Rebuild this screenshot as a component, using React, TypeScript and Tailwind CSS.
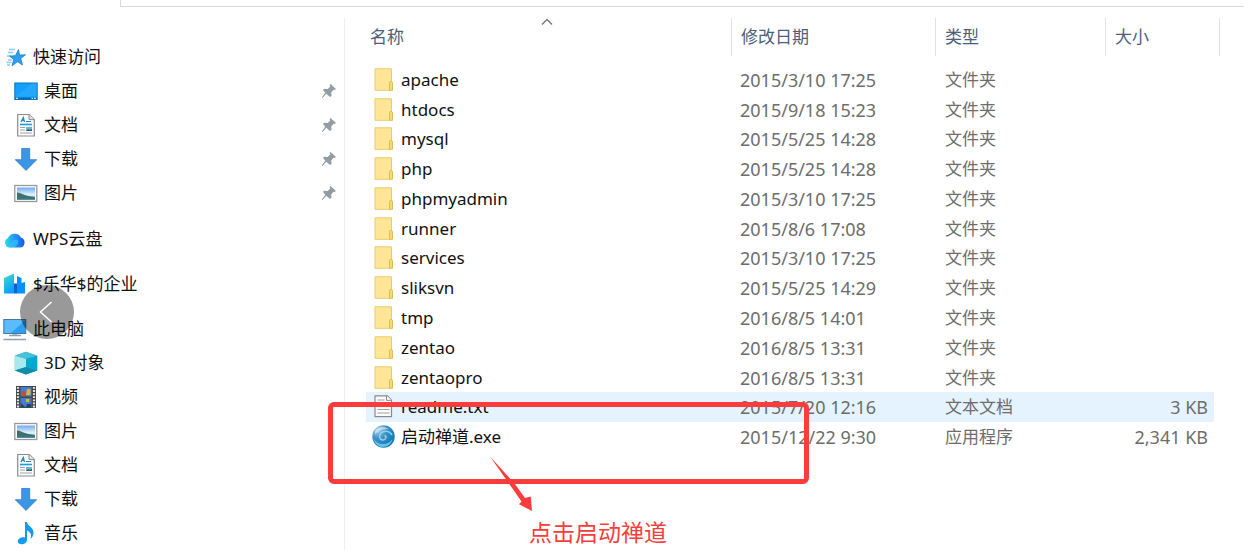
import type { ReactNode } from "react"

type SideItem = {
  label: string
  icon: ReactNode
  nested?: boolean
  pinned?: boolean
  space?: string
}

type FileRow = {
  name: string
  date: string
  kind: "folder" | "text" | "app"
  size?: string
}

function StarIcon() {
  return (
    <svg viewBox="0 0 24 24" className="size-6" aria-hidden="true">
      <path d="M6 4.500h6M5 7.500h5M4 11h4M5 15h4M3.500 17.500h5M4 20h3" stroke="#8accf5" strokeWidth="1.300" />
      <path
        d="M15.500 4.500l1 5.500 6-.2-4.700 3.700 1.700 6.500-5-3.200-5.500 4 1.700-6.300-4-3.300 5.800-.7z"
        fill="#2b9fee"
        stroke="#1677bd"
        strokeWidth=".7"
      />
    </svg>
  )
}

function DesktopIcon() {
  return (
    <svg viewBox="0 0 24 24" className="size-6" aria-hidden="true">
      <rect x=".8" y="4" width="22.400" height="16.500" fill="#149ffb" stroke="#0a76c4" />
      <path d="M1.500 17.500L18 4.500h4.700v13z" fill="#35affe" opacity=".45" />
      <path d="M1 18.500h22v2H1z" fill="#0969b0" />
      <path d="M2 19.300h2M17.500 19.300h1.500M20 19.300h2" stroke="#fff" />
    </svg>
  )
}

function DocumentIcon() {
  return (
    <svg viewBox="0 0 24 24" className="size-6" aria-hidden="true">
      <path d="M3.700 1.500h11.600l5 5v16.500H3.700z" fill="#fcfcfc" stroke="#8d8d8d" strokeWidth="1.200" />
      <path d="M15 1.500v5.100h5.300" fill="#e4e4e4" stroke="#8d8d8d" />
      <path d="M7 9l2.300-4.500L10.500 9M8 7.500h2.500M12 8.500h5" stroke="#2488cc" strokeWidth="1.200" fill="none" />
      <path d="M6 11.500h12" stroke="#1d9be4" strokeWidth="1.600" />
      <path d="M6 14.500h5M6 17h5M6 20h12" stroke="#9ba4aa" />
      <rect x="12" y="14" width="6" height="4" fill="#6cb5d2" />
      <path d="M12 18l2-2 2 1 2-1v2z" fill="#315e62" />
    </svg>
  )
}

function DownloadIcon() {
  return (
    <svg viewBox="0 0 24 24" className="size-6" aria-hidden="true">
      <path d="M7.700 1.500h8v11.200h7L12 23.400 1.300 12.700h6.400z" fill="#3c96e4" stroke="#2c7dc8" strokeWidth=".8" />
    </svg>
  )
}

function PictureIcon() {
  return (
    <svg viewBox="0 0 24 24" className="size-6" aria-hidden="true">
      <defs>
        <linearGradient id="sky" x2="0" y2="1">
          <stop stopColor="#6eaaf0" />
          <stop offset=".6" stopColor="#e2f2f8" />
          <stop offset="1" stopColor="#7fbecb" />
        </linearGradient>
      </defs>
      <rect x=".8" y="4.500" width="22" height="16" fill="#fff" stroke="#999" strokeWidth="1.300" />
      <rect x="3" y="6.500" width="18" height="12" fill="url(#sky)" />
      <path d="M3 11.500c3 0 5 1.500 8 2.500s6 1.500 10 2v2.500H3z" fill="#3e716b" />
      <path d="M3 17c6-.5 12 0 18-.5v2H3z" fill="#377789" />
    </svg>
  )
}

function CloudIcon() {
  return (
    <svg viewBox="0 0 24 24" className="size-6" aria-hidden="true">
      <defs>
        <linearGradient id="cloud">
          <stop stopColor="#29dfdc" />
          <stop offset=".5" stopColor="#2695fb" />
          <stop offset="1" stopColor="#1558e9" />
        </linearGradient>
      </defs>
      <path d="M6.500 20.500A5 5 0 0 1 5 11a7 6.500 0 0 1 13-.5 5.200 5.200 0 0 1-.5 10z" fill="url(#cloud)" />
      <path d="M3 19C8 18.500 9 12.500 13 12.500c2 0 3 2 2 4-1 2.500-3 4-7 4-2 0-4-.5-5-1.500z" fill="#32c9f5" opacity=".6" />
    </svg>
  )
}

function CompanyIcon() {
  return (
    <svg viewBox="0 0 24 24" className="size-6" aria-hidden="true">
      <defs>
        <linearGradient id="tower" x2=".4" y2="1">
          <stop stopColor="#3ce5bd" />
          <stop offset="1" stopColor="#0a9fff" />
        </linearGradient>
      </defs>
      <path d="M1 6l10-4.500v20H1z" fill="url(#tower)" />
      <path d="M14 4l4.500 2v5l3.500-1v11.500h-8z" fill="#0a91ff" />
      <path d="M11 11.500h3v10h-3z" fill="#0560cb" />
    </svg>
  )
}

function ComputerIcon() {
  return (
    <svg viewBox="0 0 24 24" className="size-6" aria-hidden="true">
      <rect x=".8" y="2.500" width="22" height="14" fill="#2b9ff3" stroke="#4d7897" />
      <path d="M1.500 3h21L8 16H1.500z" fill="#70c7ff" opacity=".7" />
      <path d="M9.500 17h5v2h-5z" fill="#a8c0cf" />
      <path d="M6 18.500h12M.5 22.500h22.500" stroke="#8f9fb0" strokeWidth="1.600" />
    </svg>
  )
}

function CubeIcon() {
  return (
    <svg viewBox="0 0 24 24" className="size-6" aria-hidden="true">
      <path d="M12 .8l11.200 4v14.700L12 23.500.8 19.500V4.800z" fill="#27aac8" />
      <path d="M.8 4.800L12 .8l11.200 4L12 8z" fill="#49c1d8" />
      <path d="M.8 4.800L12 8v8L.8 19.500z" fill="#a9e8ec" />
      <path d="M12 8l11.200-3.200v14.700L12 16z" fill="#06a8d1" />
      <path d="M.8 19.500L12 16l11.200 3.500-11.200 4z" fill="#128da9" />
    </svg>
  )
}

function VideoIcon() {
  return (
    <svg viewBox="0 0 24 24" className="size-6" aria-hidden="true">
      <path d="M2 1h20v22H2z" fill="#454545" />
      <path d="M4 2v21M20 2v21" stroke="#e6e6e6" strokeWidth="2.200" strokeDasharray="1.800 1.300" />
      <path d="M6.500 2h11v9.500h-11zM6.500 13h11v9h-11z" fill="#447ed1" />
      <path d="M7 8c3-3 3-3 5 0v3H7z" fill="#b65149" />
      <path d="M13 4h3.500v6H12zM12 14h3v3h-3z" fill="#dfb629" />
      <path d="M7 18l4 4H7zM13 19h4v3h-5z" fill="#253d70" />
    </svg>
  )
}

function MusicIcon() {
  return (
    <svg viewBox="0 0 24 24" className="size-6" aria-hidden="true">
      <path
        d="M11 1h2c.3 4 6.500 5 6.500 10.500 0 3-1.200 5-3 6.500 1.500-5-.5-7.300-3.500-8.500v9.300c0 2.500-2.500 4.500-5.500 4.500-2.300 0-3.700-1.200-3.700-3 0-2.700 3.500-4.600 7.200-3.800z"
        fill="#149af2"
      />
    </svg>
  )
}

function PinIcon() {
  return (
    <svg viewBox="0 0 16 16" className="size-4" aria-hidden="true">
      <path d="M9.500 1L15 6l-1.500 1-1-.2-2.300 2.700.3 3.300L9 14l-3.700-3.300L1.500 15H1v-.8l3.300-4.500L2 7l1-1.300 3.700.3 2.600-2.500L8.500 2z" fill="#929ca3" />
    </svg>
  )
}

function FolderIcon() {
  return (
    <svg viewBox="0 0 24 24" className="size-6" aria-hidden="true">
      <path d="M3 .8h16.500v21.500H3z" fill="#ffe696" stroke="#e9cb69" />
      <path d="M17.500 14.500c0-1.500 3-1.500 3 0v7.800h-3z" fill="#f7d874" stroke="#dfbd55" />
    </svg>
  )
}

function TextIcon() {
  return (
    <svg viewBox="0 0 24 24" className="size-6" aria-hidden="true">
      <path d="M3 .8h12.500l4 4.400v16.500H3z" fill="#fafafa" stroke="#8b8b8b" strokeWidth="1.200" />
      <path d="M14.500.8v4.500h5" fill="#fff" stroke="#8b8b8b" />
      <path d="M5.500 5h7M5.500 8h12M5.500 11.500h12M5.500 14.500h12M5.500 18h12" stroke="#a1a1a1" strokeWidth="1.200" />
    </svg>
  )
}

function AppIcon() {
  return (
    <svg viewBox="0 0 24 24" className="size-6" aria-hidden="true">
      <defs>
        <radialGradient id="orb" cx=".25" cy=".2" r=".9">
          <stop stopColor="#a9d3e8" />
          <stop offset=".45" stopColor="#3c90c6" />
          <stop offset="1" stopColor="#0876b6" />
        </radialGradient>
      </defs>
      <circle cx="11.500" cy="11.500" r="11.200" fill="url(#orb)" />
      <path d="M3 6c4-5 10-5 14-1.500-5-1-10 0-14 5z" fill="#cfe6f1" opacity=".75" />
      <path d="M1.500 13c2 4 5 6 9 6 5 0 8-2 10-5-1 5-5 8-10 8-5-.5-8-4-9-9z" fill="#62c3e6" />
      <path
        d="M20 10c-2-4-8-5-11-2-2.500 3-1.500 7 2 7 3 0 4-3.500 1.500-4.500"
        fill="none"
        stroke="#8dd3ec"
        strokeWidth="1.500"
      />
    </svg>
  )
}

const sideItems: SideItem[] = [
  { label: "快速访问", icon: <StarIcon /> },
  { label: "桌面", icon: <DesktopIcon />, nested: true, pinned: true },
  { label: "文档", icon: <DocumentIcon />, nested: true, pinned: true },
  { label: "下载", icon: <DownloadIcon />, nested: true, pinned: true },
  { label: "图片", icon: <PictureIcon />, nested: true, pinned: true },
  { label: "WPS云盘", icon: <CloudIcon />, space: "mt-3" },
  { label: "$乐华$的企业", icon: <CompanyIcon />, space: "mt-[11px]" },
  { label: "此电脑", icon: <ComputerIcon />, space: "mt-[11px]" },
  { label: "3D 对象", icon: <CubeIcon />, nested: true },
  { label: "视频", icon: <VideoIcon />, nested: true },
  { label: "图片", icon: <PictureIcon />, nested: true },
  { label: "文档", icon: <DocumentIcon />, nested: true },
  { label: "下载", icon: <DownloadIcon />, nested: true },
  { label: "音乐", icon: <MusicIcon />, nested: true },
]

const files: FileRow[] = [
  { name: "apache", date: "2015/3/10 17:25", kind: "folder" },
  { name: "htdocs", date: "2015/9/18 15:23", kind: "folder" },
  { name: "mysql", date: "2015/5/25 14:28", kind: "folder" },
  { name: "php", date: "2015/5/25 14:28", kind: "folder" },
  { name: "phpmyadmin", date: "2015/3/10 17:25", kind: "folder" },
  { name: "runner", date: "2015/8/6 17:08", kind: "folder" },
  { name: "services", date: "2015/3/10 17:25", kind: "folder" },
  { name: "sliksvn", date: "2015/5/25 14:29", kind: "folder" },
  { name: "tmp", date: "2016/8/5 14:01", kind: "folder" },
  { name: "zentao", date: "2016/8/5 13:31", kind: "folder" },
  { name: "zentaopro", date: "2016/8/5 13:31", kind: "folder" },
  { name: "readme.txt", date: "2015/7/20 12:16", kind: "text", size: "3 KB" },
  { name: "启动禅道.exe", date: "2015/12/22 9:30", kind: "app", size: "2,341 KB" },
]

const kinds = {
  folder: { label: "文件夹", icon: <FolderIcon /> },
  text: { label: "文本文档", icon: <TextIcon /> },
  app: { label: "应用程序", icon: <AppIcon /> },
}

function Sidebar() {
  return (
    <nav className="mt-[11px] w-[345px] shrink-0 border-r border-[#f0f0f0] pt-[22px]">
      <ul>
        {sideItems.map((item, i) => (
          <li key={i} className={item.space}>
            <a
              href="#"
              className={`flex h-[34px] items-center gap-[6px] pr-[7px] ${item.nested ? "pl-[14px]" : "pl-[3px]"}`}
            >
              {item.icon}
              <span className="flex-1">{item.label}</span>
              {item.pinned && <PinIcon />}
            </a>
          </li>
        ))}
      </ul>
    </nav>
  )
}

function HeaderCell({ label, className, first }: { label: string; className: string; first?: boolean }) {
  return (
    <th className={`h-[47px] p-0 align-top font-normal ${className}`}>
      <button
        className={`relative block h-[38px] w-full border-r border-[#e2e2e2] text-left text-[#4c607a] ${first ? "pl-1" : "pl-[9px]"}`}
      >
        {label}
        {first && (
          <svg viewBox="0 0 12 8" className="absolute inset-x-0 top-0 mx-auto h-2 w-3 -translate-x-0.5" aria-hidden="true">
            <path d="M1 6.500l5-5 5 5" fill="none" stroke="#777" strokeWidth="1.400" />
          </svg>
        )}
      </button>
    </th>
  )
}

function FileTable() {
  return (
    <table className="h-[434px] w-full table-fixed border-separate border-spacing-0">
      <thead>
        <tr className="h-[47px]">
          <HeaderCell label="名称" className="" first />
          <HeaderCell label="修改日期" className="w-[204px]" />
          <HeaderCell label="类型" className="w-[170px]" />
          <HeaderCell label="大小" className="w-[114px]" />
        </tr>
      </thead>
      <tbody>
        {files.map((file) => (
          <tr key={file.name} className={file.kind === "text" ? "bg-[#e5f3ff]" : ""}>
            <td className="p-0 pl-[6px]">
              <div className="flex items-center gap-[5px] leading-6">
                {kinds[file.kind].icon}
                {file.name}
              </div>
            </td>
            <td className="p-0 pl-2 text-[18px] leading-6 text-[#6d6d6d]">{file.date}</td>
            <td className="p-0 pl-[9px] leading-6 text-[#6d6d6d]">{kinds[file.kind].label}</td>
            <td className="border-r-[6px] border-white p-0 pr-[6px] text-right text-[18px] leading-6 text-[#6d6d6d]">
              {file.size}
            </td>
          </tr>
        ))}
      </tbody>
    </table>
  )
}

export default function App() {
  return (
    <div className="relative min-h-screen overflow-hidden bg-white font-['Noto_Sans','Noto_Sans_CJK_SC',sans-serif] text-[17px] leading-6 text-[#111]">
      <div className="mr-[5px] ml-[120px] h-[7px] border-b border-l border-[#d9d9d9]" />
      <div className="flex">
        <Sidebar />
        <main className="min-w-0 flex-1 pt-[11px] pr-[29px] pl-[21px]">
          <FileTable />
        </main>
      </div>

      <button
        aria-label="上一张"
        className="absolute top-[285px] left-[20px] flex size-[54px] items-center justify-center rounded-full bg-black/40"
      >
        <svg viewBox="0 0 24 24" className="size-6" aria-hidden="true">
          <path d="M16.500 2L5.500 12l11 10" fill="none" stroke="#fff" strokeWidth="1.500" />
        </svg>
      </button>

      <div className="pointer-events-none absolute top-[402px] left-[328px] h-[82px] w-[481px] rounded-[6px] border-[5px] border-[#fa3c3c]" />
      <svg viewBox="0 0 46 58" className="pointer-events-none absolute top-[455px] left-[489px] h-[58px] w-[46px]" aria-hidden="true">
        <path d="M1 1.500l24.300 26.800L36 43l5.700-1.500L43 56l-13-6.700 2.500-2.800L21 30z" fill="#fa3c3c" />
      </svg>
      <p className="absolute top-[516px] left-[529px] text-[23px] leading-8 text-[#fa3c3c]">点击启动禅道</p>
    </div>
  )
}
